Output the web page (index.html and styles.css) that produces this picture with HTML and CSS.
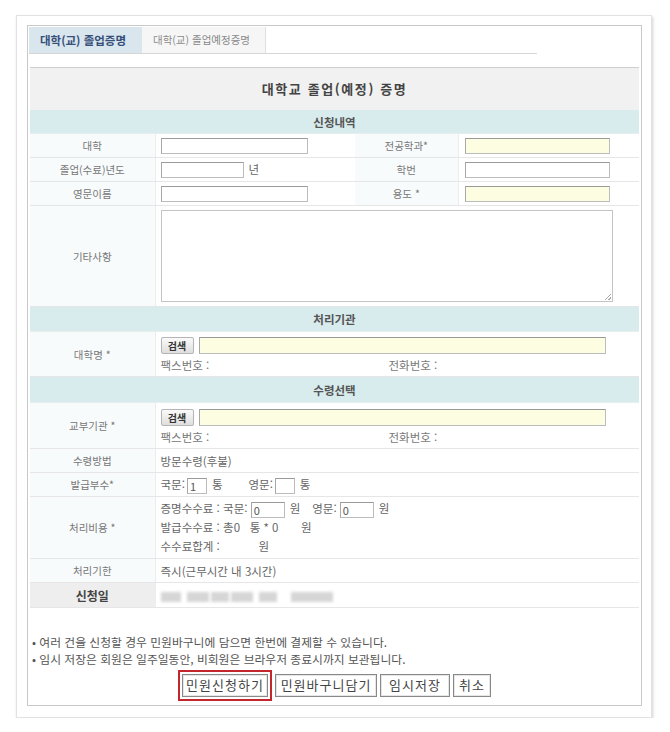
FILE: index.html
```html
<!DOCTYPE html>
<html lang="ko">
<head>
<meta charset="utf-8">
<title>대학교 졸업(예정) 증명</title>
<link rel="stylesheet" href="styles.css">
</head>
<body>
<div class="page">
  <div class="card">
    <div class="box">
      <div class="tabs">
        <div class="tab active">대학(교) 졸업증명</div>
        <div class="tab">대학(교) 졸업예정증명</div>
      </div>
      <div class="form">
        <div class="title">대학교 졸업(예정) 증명</div>
        <table class="grid">
          <colgroup>
            <col class="c1"><col class="c2"><col class="c3"><col class="c4">
          </colgroup>
          <tr class="sec s1"><th colspan="4">신청내역</th></tr>
          <tr class="r">
            <td class="lbl">대학</td>
            <td class="val"><span class="inp w147"></span></td>
            <td class="lbl">전공학과*</td>
            <td class="val v2"><span class="inp w145 req"></span></td>
          </tr>
          <tr class="r">
            <td class="lbl">졸업(수료)년도</td>
            <td class="val"><span class="inp w83"></span><span class="unit">년</span></td>
            <td class="lbl">학번</td>
            <td class="val v2"><span class="inp w145"></span></td>
          </tr>
          <tr class="r">
            <td class="lbl">영문이름</td>
            <td class="val"><span class="inp w147"></span></td>
            <td class="lbl">용도 *</td>
            <td class="val v2"><span class="inp w145 req"></span></td>
          </tr>
          <tr class="r tall">
            <td class="lbl">기타사항</td>
            <td class="val" colspan="3"><span class="area"><span class="grip"></span></span></td>
          </tr>
          <tr class="sec"><th colspan="4">처리기관</th></tr>
          <tr class="r mid">
            <td class="lbl">대학명 *</td>
            <td class="val" colspan="3">
              <div class="search"><span class="sbtn">검색</span><span class="inp req wide"></span></div>
              <div class="contact"><span class="fax">팩스번호 :</span><span>전화번호 :</span></div>
            </td>
          </tr>
          <tr class="sec s3"><th colspan="4">수령선택</th></tr>
          <tr class="r mid m2">
            <td class="lbl">교부기관 *</td>
            <td class="val" colspan="3">
              <div class="search"><span class="sbtn">검색</span><span class="inp req wide"></span></div>
              <div class="contact"><span class="fax">팩스번호 :</span><span>전화번호 :</span></div>
            </td>
          </tr>
          <tr class="r">
            <td class="lbl">수령방법</td>
            <td class="val" colspan="3">방문수령(후불)</td>
          </tr>
          <tr class="r">
            <td class="lbl">발급부수*</td>
            <td class="val" colspan="3">
              <span class="line">국문:<span class="inp sm">1</span><span class="unit">통</span><span class="gap"></span>영문:<span class="inp sm"></span><span class="unit">통</span></span>
            </td>
          </tr>
          <tr class="r fee">
            <td class="lbl">처리비용 *</td>
            <td class="val" colspan="3">
              <div class="line">증명수수료 : 국문: <span class="inp md">0</span><span class="unit">원</span><span class="gap2"></span>영문: <span class="inp md">0</span><span class="unit">원</span></div>
              <div class="line">발급수수료 : 총0&nbsp;&nbsp;&nbsp;통 * 0&nbsp;&nbsp;&nbsp;&nbsp;&nbsp;&nbsp;&nbsp;원</div>
              <div class="line">수수료합계 :&nbsp;&nbsp;&nbsp;&nbsp;&nbsp;&nbsp;&nbsp;&nbsp;&nbsp;&nbsp;&nbsp;&nbsp;원</div>
            </td>
          </tr>
          <tr class="r">
            <td class="lbl">처리기한</td>
            <td class="val" colspan="3">즉시(근무시간 내 3시간)</td>
          </tr>
          <tr class="r last">
            <td class="lbl dark">신청일</td>
            <td class="val" colspan="3">
              <span class="blur b1"></span><span class="blur b2"></span><span class="blur b3"></span><span class="blur b4"></span><span class="blur b5"></span><span class="blur b6"></span>
            </td>
          </tr>
        </table>
      </div>
      <ul class="notes">
        <li>• 여러 건을 신청할 경우 민원바구니에 담으면 한번에 결제할 수 있습니다.</li>
        <li>• 임시 저장은 회원은 일주일동안, 비회원은 브라우저 종료시까지 보관됩니다.</li>
      </ul>
      <div class="btns">
        <span class="hl"><span class="btn bw1">민원신청하기</span></span>
        <span class="btn bw2">민원바구니담기</span>
        <span class="btn bw3">임시저장</span>
        <span class="btn bw4">취소</span>
      </div>
    </div>
  </div>
</div>
</body>
</html>
```
FILE: styles.css
```css
html, body {
  margin: 0;
  padding: 0;
  background: #fff;
}
body {
  font-family: "Noto Sans CJK KR", "Noto Sans", sans-serif;
  font-size: 11.5px;
  color: #666;
}
.page {
  padding: 15px 0 0 16px;
}
.card {
  box-sizing: border-box;
  width: 636px;
  height: 703px;
  border: 1px solid #e2e2e2;
  box-shadow: 1px 2px 3px rgba(0,0,0,0.18);
  padding: 9px 9px 0 10px;
  background: #fff;
}
.box {
  box-sizing: border-box;
  width: 615px;
  height: 681px;
  border: 1px solid #c9c9c9;
  padding: 1px 2px 0 1px;
}
.tabs {
  display: flex;
  width: 508px;
  height: 26px;
  border-bottom: 1px solid #d6d6d6;
}
.tab {
  box-sizing: border-box;
  height: 26px;
  line-height: 26px;
  padding: 0 11px;
  background: #f6f6f6;
  border-right: 1px solid #e0e0e0;
  color: #8a8a8a;
  font-size: 10.5px;
  width: 124px;
}
.tab.active {
  width: 113px;
  background: #d9e6ee;
  color: #36507a;
  font-weight: bold;
  font-size: 11.5px;
  border-right: none;
}
.form {
  margin: 13px 0 0 1px;
  border-top: 1px solid #cfcfcf;
  width: 609px;
}
.title {
  height: 42px;
  line-height: 42px;
  background: #f1f1f1;
  text-align: center;
  font-weight: bold;
  font-size: 13px;
  color: #444;
  letter-spacing: 1.6px;
}
.grid {
  width: 609px;
  border-collapse: collapse;
  table-layout: fixed;
}
.c1 { width: 125px; }
.c2 { width: 200px; }
.c3 { width: 103px; }
.c4 { width: 181px; }
.sec th {
  height: 24px;
  padding: 0;
  background: #d8ecee;
  color: #555;
  font-size: 11.5px;
  font-weight: bold;
  text-align: center;
  border-bottom: 1px solid #e6eeee;
}
.sec.s1 th { height: 23px; }
.sec.s3 th { height: 25px; }
.r td {
  height: 23px;
  padding: 0;
  border-bottom: 1px solid #e6e6e6;
  vertical-align: middle;
}
.lbl {
  background: #f8fbfc;
  text-align: center;
  color: #777;
  font-size: 10.5px;
  border-right: 1px solid #ececec;
}
.lbl.dark {
  background: #eeeeee;
  color: #444;
  font-weight: bold;
  font-size: 12px;
}
.val {
  padding-left: 5px !important;
  color: #666;
}
.val.v2 {
  padding-left: 6px !important;
}
.inp {
  box-sizing: border-box;
  display: inline-block;
  vertical-align: middle;
  height: 16px;
  border: 1px solid #bcbcbc;
  border-top-color: #9a9a9a;
  border-left-color: #a8a8a8;
  background: #fff;
  font-size: 11px;
  line-height: 14px;
  padding-left: 2px;
  color: #555;
}
.inp.req { background: #fdfde2; }
.w147 { width: 147px; }
.w145 { width: 145px; }
.w83 { width: 83px; }
.unit { margin-left: 5px; }
.tall td { height: 100px; }
.area {
  position: relative;
  display: block;
  box-sizing: border-box;
  width: 452px;
  height: 92px;
  border: 1px solid #c4c4c4;
  background: #fff;
}
.grip {
  position: absolute;
  right: 1px;
  bottom: 1px;
  width: 6px;
  height: 6px;
  background: linear-gradient(135deg, transparent 45%, #aaa 45%, #aaa 55%, transparent 55%, transparent 75%, #aaa 75%, #aaa 85%, transparent 85%);
}
.mid td { height: 44px; }
.mid.m2 td { height: 45px; }
.search {
  display: flex;
  align-items: center;
  gap: 5px;
  margin-top: 2px;
}
.sbtn {
  box-sizing: border-box;
  width: 33px;
  height: 17px;
  line-height: 15px;
  text-align: center;
  font-size: 10px;
  font-weight: bold;
  color: #333;
  border: 1px solid #b5b5b5;
  border-radius: 2px;
  background: linear-gradient(#fafafa, #dedede);
}
.inp.wide {
  width: 407px;
  height: 17px;
}
.contact {
  margin-top: 3px;
  color: #777;
}
.fax {
  display: inline-block;
  width: 228px;
}
.inp.sm {
  width: 20px;
  margin-left: 2px;
}
.inp.md {
  width: 34px;
}
.gap { display: inline-block; width: 26px; }
.gap2 { display: inline-block; width: 12px; }
.line { line-height: 18px; }
.fee td { height: 61px; }
.fee .line { line-height: 19px; }
.last td { height: 24px; }
.blur {
  display: inline-block;
  height: 10px;
  background: #d6d6d6;
  vertical-align: middle;
  filter: blur(1.5px);
  margin-right: 6px;
}
.b1 { width: 20px; }
.b2 { width: 22px; margin-right: 2px; }
.b3 { width: 18px; margin-right: 2px; }
.b4 { width: 22px; }
.b5 { width: 18px; margin-right: 14px; }
.b6 { width: 42px; }
.notes {
  list-style: none;
  margin: 25px 0 0 3px;
  padding: 0;
  font-size: 11.8px;
  line-height: 17px;
  color: #555;
}
.btns {
  display: flex;
  justify-content: center;
  align-items: center;
  gap: 3px;
  margin-top: 3px;
  margin-left: 1px;
}
.hl {
  display: inline-flex;
  padding: 2px;
  border: 2px solid #c4262e;
}
.btn {
  box-sizing: border-box;
  display: inline-block;
  height: 23px;
  line-height: 20px;
  padding: 0;
  border: 1px solid #888;
  box-shadow: inset 0 0 0 1px #e6e6e6;
  background: #fff;
  color: #444;
  font-size: 13px;
  letter-spacing: 1px;
  text-align: center;
  white-space: nowrap;
}
.bw1 { width: 86px; }
.bw2 { width: 102px; }
.bw3 { width: 70px; }
.bw4 { width: 38px; }
```
